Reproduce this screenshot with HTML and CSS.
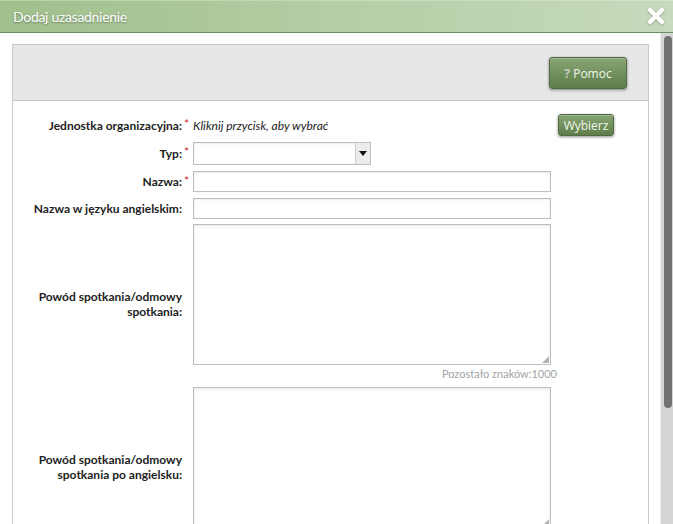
FILE: index.html
```html
<!DOCTYPE html>
<html lang="pl">
<head>
<meta charset="utf-8">
<title>Dodaj uzasadnienie</title>
<link rel="stylesheet" href="styles.css">
</head>
<body>
<div class="dialog">
  <div class="titlebar">
    <span class="title">Dodaj uzasadnienie</span>
    <svg class="close" width="18" height="18" viewBox="0 0 18 18" aria-label="Zamknij">
      <path d="M3 3 L15 15 M15 3 L3 15" stroke="#ffffff" stroke-width="4.2" stroke-linecap="round"/>
    </svg>
  </div>
  <div class="body">
    <div class="content">
      <div class="panel">
        <div class="toolbar">
          <button class="btn btn-help"><b class="q">?</b> Pomoc</button>
        </div>
        <div class="form">
          <div class="lbl">Jednostka organizacyjna:</div>
          <div class="req">*</div>
          <div class="field pick">
            <span class="hint">Kliknij przycisk, aby wybrać</span>
            <button class="btn btn-small">Wybierz</button>
          </div>

          <div class="lbl">Typ:</div>
          <div class="req">*</div>
          <div class="field">
            <div class="select"><span class="sel-val"></span><span class="sel-arrow"></span></div>
          </div>

          <div class="lbl">Nazwa:</div>
          <div class="req">*</div>
          <div class="field"><input class="input" type="text"></div>

          <div class="lbl">Nazwa w języku angielskim:</div>
          <div class="req"></div>
          <div class="field"><input class="input" type="text"></div>

          <div class="lbl lbl-tall">Powód spotkania/odmowy spotkania:</div>
          <div class="req req-tall"></div>
          <div class="field area-wrap"><textarea class="area"></textarea><span class="grip"></span></div>
          <div class="counter">Pozostało znaków:1000</div>

          <div class="lbl lbl-tall">Powód spotkania/odmowy spotkania po angielsku:</div>
          <div class="req req-tall"></div>
          <div class="field area-wrap"><textarea class="area"></textarea><span class="grip"></span></div>
          <div class="counter-space"></div>
        </div>
      </div>
    </div>
    <div class="scrollbar"><div class="thumb"></div></div>
  </div>
</div>
</body>
</html>
```

FILE: styles.css
```css
html, body {
  margin: 0;
  padding: 0;
  height: 100%;
  overflow: hidden;
  background: #ffffff;
}
body {
  font-family: Lato, "Open Sans", Arial, sans-serif;
  color: #222;
}
.dialog {
  display: flex;
  flex-direction: column;
  height: 100%;
}
.titlebar {
  height: 32px;
  flex: none;
  display: flex;
  align-items: center;
  justify-content: space-between;
  padding: 0 8px 0 13px;
  background: linear-gradient(to right, #a0bf8c 0%, #b4cea5 50%, #c7dabc 100%);
  border-bottom: 1px solid #6f8d5c;
  box-shadow: inset 0 1px 0 rgba(255,255,255,0.25);
}
.title {
  color: #fff;
  font-size: 14px;
  letter-spacing: -0.3px;
  text-shadow: 0 1px 2px rgba(0,0,0,0.35);
}
.close {
  display: block;
  filter: drop-shadow(0 1px 1px rgba(0,0,0,0.25));
}
.body {
  flex: 1;
  display: flex;
  min-height: 0;
}
.content {
  flex: 1;
  padding: 11px 11px 0 12px;
  min-width: 0;
}
.panel {
  border: 1px solid #c9c9c9;
  height: 600px;
}
.toolbar {
  height: 56px;
  background: #e7e7e7;
  border-bottom: 1px solid #c9c9c9;
  display: flex;
  justify-content: flex-end;
  align-items: flex-start;
  padding: 12px 21px 0 0;
  box-sizing: border-box;
}
.btn {
  font-family: "Open Sans", Lato, sans-serif;
  color: #f2f5ee;
  background: linear-gradient(to bottom, #89a676 0%, #6f8f5b 55%, #5e7d4b 100%);
  border: 1px solid #4f6a3f;
  border-radius: 3px;
  box-shadow: 0 1px 3px rgba(0,0,0,0.45), inset 0 1px 0 rgba(255,255,255,0.2);
  cursor: pointer;
  padding: 0;
}
.btn-help {
  width: 78px;
  height: 32px;
  font-size: 12px;
}
.btn-help .q {
  color: #c9cdc4;
  font-weight: 700;
}
.btn-small {
  width: 56px;
  height: 22px;
  font-size: 12px;
}
.form {
  display: grid;
  grid-template-columns: 151px 11px 358px 1fr;
  row-gap: 6px;
  padding: 13px 0 0 18px;
  align-items: center;
}
.lbl {
  grid-column: 1;
  text-align: right;
  font-weight: 700;
  font-size: 12px;
  color: #222;
  line-height: 15px;
}
.req {
  grid-column: 2;
  color: #d21e1e;
  font-size: 12px;
  align-self: start;
  padding-left: 2px;
  line-height: 15px;
  margin-top: 2px;
}
.field {
  grid-column: 3;
  display: flex;
}
.pick {
  grid-column: 3 / 5;
  justify-content: space-between;
  align-items: center;
  padding-right: 34px;
}
.hint {
  font-style: italic;
  font-size: 12px;
  color: #222;
}
.select {
  width: 178px;
  height: 23px;
  box-sizing: border-box;
  border: 1px solid #bdbdbd;
  display: flex;
  background: #fff;
  box-shadow: inset 0 1px 2px rgba(0,0,0,0.08);
}
.sel-val { flex: 1; }
.sel-arrow {
  width: 14px;
  border-left: 1px solid #cfcfcf;
  background: #ececec;
  position: relative;
}
.sel-arrow::after {
  content: "";
  position: absolute;
  left: 3px;
  top: 8px;
  border-left: 4px solid transparent;
  border-right: 4px solid transparent;
  border-top: 5px solid #111;
}
.input {
  width: 358px;
  height: 21px;
  box-sizing: border-box;
  border: 1px solid #bdbdbd;
  margin: 0;
  padding: 0 4px;
  box-shadow: inset 0 1px 2px rgba(0,0,0,0.08);
}
.area-wrap {
  position: relative;
  margin-top: -1px;
}
.area {
  width: 358px;
  height: 141px;
  box-sizing: border-box;
  border: 1px solid #bdbdbd;
  margin: 0;
  resize: none;
  display: block;
  box-shadow: inset 0 2px 3px rgba(0,0,0,0.07);
}
.grip {
  position: absolute;
  right: 2px;
  bottom: 2px;
  width: 7px;
  height: 7px;
  background: radial-gradient(circle, #b5b5b5 0.8px, transparent 1px) 0 0 / 2px 2px;
  clip-path: polygon(100% 0, 100% 100%, 0 100%);
}
.lbl-tall { grid-row: span 2; }
.req-tall { grid-row: span 2; }
.counter {
  grid-column: 3;
  font-size: 11px;
  color: #a3a3a3;
  text-align: right;
  margin-right: -6px;
  margin-top: -6px;
  line-height: 17px;
}
.counter-space {
  grid-column: 3;
  height: 17px;
  margin-top: -6px;
}
.scrollbar {
  width: 13px;
  flex: none;
  background: #d6d6d6;
  padding: 3px 0 0 3px;
  box-sizing: border-box;
  border-left: 1px solid #ececec;
}
.thumb {
  width: 8px;
  height: 372px;
  border-radius: 4px;
  background: #727272;
}
```
